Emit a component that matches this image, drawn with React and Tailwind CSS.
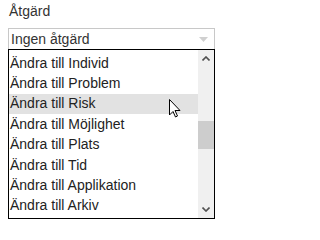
import React from "react";

const items = [
  "Ändra till Individ",
  "Ändra till Problem",
  "Ändra till Risk",
  "Ändra till Möjlighet",
  "Ändra till Plats",
  "Ändra till Tid",
  "Ändra till Applikation",
  "Ändra till Arkiv",
];

export default function App() {
  return (
    <div
      className="w-[223px] h-[229px] bg-white text-[14px] text-[#333] relative"
      style={{ fontFamily: '"Liberation Sans", Arial, sans-serif' }}
    >
      <div className="pl-[9px] pt-[3px] leading-[17px]">Åtgärd</div>
      <div className="relative mx-[8px] mt-[8px] h-[22px] border border-[#c8c8c8] flex items-center pl-[2px] leading-[16px]">
        <span>Ingen åtgärd</span>
        <svg className="absolute right-[6px] top-[8px]" width="9" height="5" viewBox="0 0 9 5">
          <path d="M0 0 L9 0 L4.5 5 Z" fill="#d0d0d0" />
        </svg>
      </div>
      <div className="relative mx-[8px] -mt-[1px] h-[170px] border border-black bg-white flex overflow-hidden">
        <div className="flex-1 pt-[3px]">
          {items.map((t, i) => (
            <div
              key={t}
              className={
                "h-[20.4px] flex items-center pl-[1px] text-[#222] " +
                (i === 2 ? "bg-[#e2e2e2]" : "")
              }
            >
              {t}
            </div>
          ))}
        </div>
        <div className="w-[16px] bg-[#f0f0f0] flex flex-col items-center">
          <div className="h-[17px] flex items-center justify-center">
            <svg width="8" height="5" viewBox="0 0 8 5">
              <path d="M0.5 4.5 L4 1 L7.5 4.5" stroke="#505050" strokeWidth="1.6" fill="none" />
            </svg>
          </div>
          <div className="mt-[54px] w-full h-[28px] bg-[#cdcdcd]" />
          <div className="flex-1" />
          <div className="h-[17px] flex items-center justify-center">
            <svg width="8" height="5" viewBox="0 0 8 5">
              <path d="M0.5 0.5 L4 4 L7.5 0.5" stroke="#505050" strokeWidth="1.6" fill="none" />
            </svg>
          </div>
        </div>
      </div>
      <svg
        className="absolute left-[169px] top-[99px]"
        width="12"
        height="19"
        viewBox="0 0 12 19"
      >
        <path
          d="M0.5 0.5 L0.5 16 L4 12.5 L6.5 18 L8.5 17 L6 11.5 L11 11.5 Z"
          fill="white"
          stroke="black"
          strokeWidth="1"
          strokeLinejoin="round"
        />
      </svg>
    </div>
  );
}
